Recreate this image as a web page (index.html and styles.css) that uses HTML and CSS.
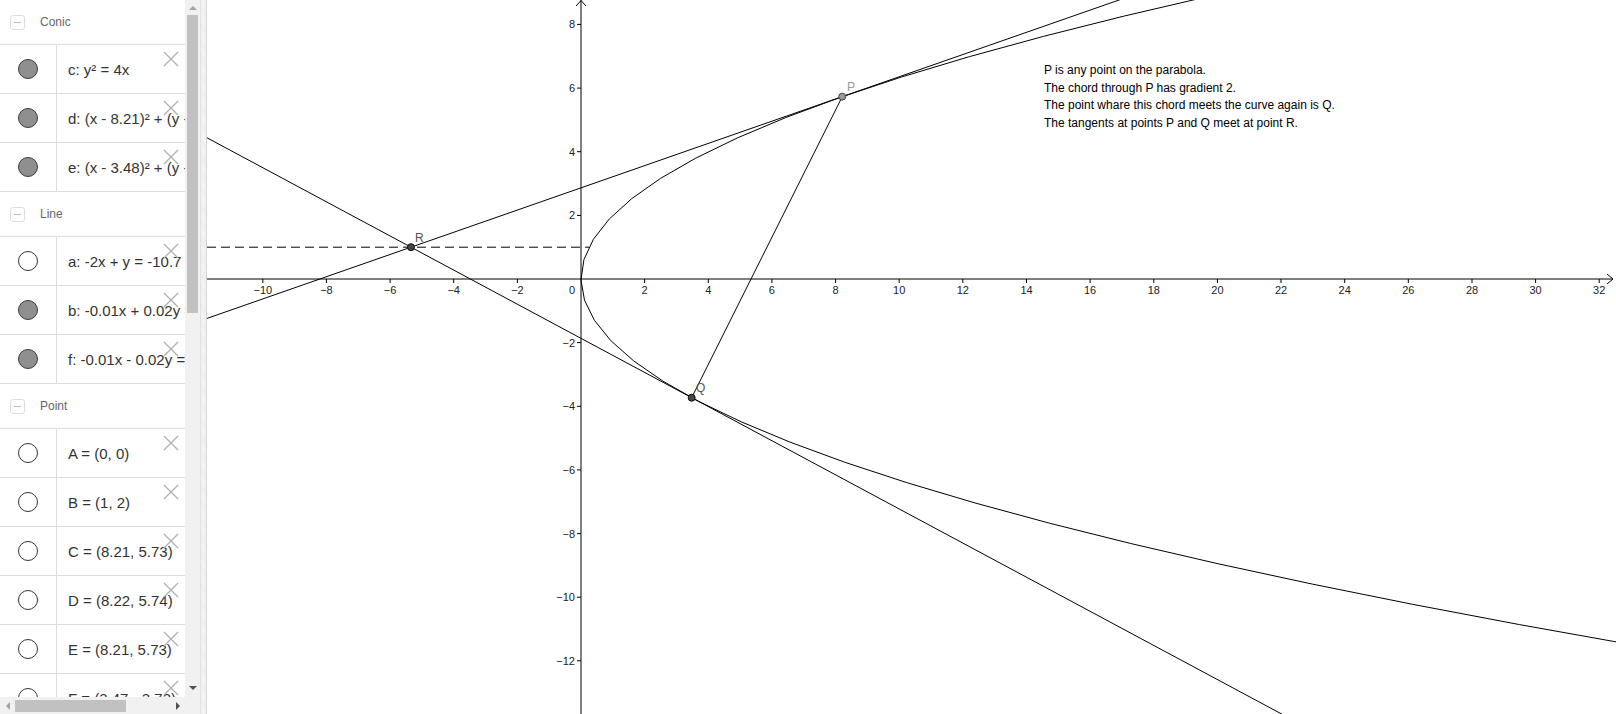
FILE: index.html
```html
<!DOCTYPE html>
<html>
<head>
<meta charset="utf-8">
<link rel="stylesheet" href="styles.css">
</head>
<body>
<div class="app">
  <aside class="algebra">
    <div class="list">
      <div class="group-head"><span class="toggle"></span><span class="gname">Conic</span></div>
      <div class="item"><div class="marble-cell"><span class="marble filled"></span></div><div class="expr">c: y² = 4x</div><svg class="del" viewBox="0 0 16 16"><path d="M1 1L15 15M15 1L1 15"/></svg></div>
      <div class="item"><div class="marble-cell"><span class="marble filled"></span></div><div class="expr">d: (x - 8.21)² + (y - 5.73)² = 0</div><svg class="del" viewBox="0 0 16 16"><path d="M1 1L15 15M15 1L1 15"/></svg></div>
      <div class="item"><div class="marble-cell"><span class="marble filled"></span></div><div class="expr">e: (x - 3.48)² + (y + 3.73)² = 0</div><svg class="del" viewBox="0 0 16 16"><path d="M1 1L15 15M15 1L1 15"/></svg></div>
      <div class="group-head"><span class="toggle"></span><span class="gname">Line</span></div>
      <div class="item"><div class="marble-cell"><span class="marble"></span></div><div class="expr">a: -2x + y = -10.7</div><svg class="del" viewBox="0 0 16 16"><path d="M1 1L15 15M15 1L1 15"/></svg></div>
      <div class="item"><div class="marble-cell"><span class="marble filled"></span></div><div class="expr">b: -0.01x + 0.02y = 0</div><svg class="del" viewBox="0 0 16 16"><path d="M1 1L15 15M15 1L1 15"/></svg></div>
      <div class="item"><div class="marble-cell"><span class="marble filled"></span></div><div class="expr">f: -0.01x - 0.02y = 0</div><svg class="del" viewBox="0 0 16 16"><path d="M1 1L15 15M15 1L1 15"/></svg></div>
      <div class="group-head"><span class="toggle"></span><span class="gname">Point</span></div>
      <div class="item"><div class="marble-cell"><span class="marble"></span></div><div class="expr">A = (0, 0)</div><svg class="del" viewBox="0 0 16 16"><path d="M1 1L15 15M15 1L1 15"/></svg></div>
      <div class="item"><div class="marble-cell"><span class="marble"></span></div><div class="expr">B = (1, 2)</div><svg class="del" viewBox="0 0 16 16"><path d="M1 1L15 15M15 1L1 15"/></svg></div>
      <div class="item"><div class="marble-cell"><span class="marble"></span></div><div class="expr">C = (8.21, 5.73)</div><svg class="del" viewBox="0 0 16 16"><path d="M1 1L15 15M15 1L1 15"/></svg></div>
      <div class="item"><div class="marble-cell"><span class="marble"></span></div><div class="expr">D = (8.22, 5.74)</div><svg class="del" viewBox="0 0 16 16"><path d="M1 1L15 15M15 1L1 15"/></svg></div>
      <div class="item"><div class="marble-cell"><span class="marble"></span></div><div class="expr">E = (8.21, 5.73)</div><svg class="del" viewBox="0 0 16 16"><path d="M1 1L15 15M15 1L1 15"/></svg></div>
      <div class="item"><div class="marble-cell"><span class="marble"></span></div><div class="expr">F = (3.47, -3.73)</div><svg class="del" viewBox="0 0 16 16"><path d="M1 1L15 15M15 1L1 15"/></svg></div>
    </div>
    <div class="vscroll">
      <div class="arrow-v"><span class="tri-up"></span></div>
      <div class="vthumb"></div>
      <div class="vspace"></div>
      <div class="arrow-v down"><span class="tri-down"></span></div>
    </div>
    <div class="hscroll">
      <div class="arrow-h"><span class="tri-left"></span></div>
      <div class="hthumb"></div>
      <div class="hspace"></div>
      <div class="arrow-h"><span class="tri-right"></span></div>
    </div>
    <div class="corner"></div>
  </aside>
  <div class="splitter"></div>
  <main class="graphics">
    <svg class="plot" width="1409" height="714" viewBox="207 0 1409 714">
      <g class="axes">
        <line x1="207" y1="279" x2="1613" y2="279"/>
        <path d="M1607 274L1613 279L1607 284"/>
        <line x1="581" y1="0" x2="581" y2="714"/>
        <path d="M576 6L581 0.5L586 6"/>
        <path d="M262.8 279v4M326.4 279v4M390.1 279v4M453.7 279v4M517.4 279v4M644.6 279v4M708.3 279v4M771.9 279v4M835.6 279v4M899.2 279v4M962.8 279v4M1026.5 279v4M1090.1 279v4M1153.8 279v4M1217.4 279v4M1281 279v4M1344.7 279v4M1408.3 279v4M1472 279v4M1535.6 279v4M1599.2 279v4"/>
        <path d="M581 24.4h-4M581 88.1h-4M581 151.7h-4M581 215.4h-4M581 342.6h-4M581 406.3h-4M581 469.9h-4M581 533.6h-4M581 597.2h-4M581 660.8h-4"/>
      </g>
      <g class="xlab">
        <text x="262.8" y="294">−10</text>
        <text x="326.4" y="294">−8</text>
        <text x="390.1" y="294">−6</text>
        <text x="453.7" y="294">−4</text>
        <text x="517.4" y="294">−2</text>
        <text x="644.6" y="294">2</text>
        <text x="708.3" y="294">4</text>
        <text x="771.9" y="294">6</text>
        <text x="835.6" y="294">8</text>
        <text x="899.2" y="294">10</text>
        <text x="962.8" y="294">12</text>
        <text x="1026.5" y="294">14</text>
        <text x="1090.1" y="294">16</text>
        <text x="1153.8" y="294">18</text>
        <text x="1217.4" y="294">20</text>
        <text x="1281" y="294">22</text>
        <text x="1344.7" y="294">24</text>
        <text x="1408.3" y="294">26</text>
        <text x="1472" y="294">28</text>
        <text x="1535.6" y="294">30</text>
        <text x="1599.2" y="294">32</text>
      </g>
      <g class="ylab">
        <text x="575" y="28.4">8</text>
        <text x="575" y="92.1">6</text>
        <text x="575" y="155.7">4</text>
        <text x="575" y="219.4">2</text>
        <text x="575" y="294">0</text>
        <text x="575" y="346.6">−2</text>
        <text x="575" y="410.3">−4</text>
        <text x="575" y="473.9">−6</text>
        <text x="575" y="537.6">−8</text>
        <text x="575" y="601.2">−10</text>
        <text x="575" y="664.8">−12</text>
      </g>
      <g class="curves">
        <path d="M1633 644.9Q-233.2 320.4 1211.1 -4.2"/>
        <line x1="207" y1="318.4" x2="1133.4" y2="-5"/>
        <line x1="207" y1="137.8" x2="1292.8" y2="720"/>
        <line x1="842.24" y1="96.67" x2="691.67" y2="397.69"/>
        <line class="dash" x1="207" y1="247.2" x2="589" y2="247.2"/>
      </g>
      <g class="pts">
        <circle class="pt-dark" cx="410.96" cy="247.17" r="3.5"/>
        <circle class="pt-dark" cx="691.67" cy="397.69" r="3.5"/>
        <circle class="pt-light" cx="842.24" cy="96.67" r="3.5"/>
        <text class="lab-dark" x="415" y="242">R</text>
        <text class="lab-dark" x="696" y="392">Q</text>
        <text class="lab-light" x="847" y="91">P</text>
      </g>
      <g class="note">
        <text x="1044" y="74">P is any point on the parabola.</text>
        <text x="1044" y="91.5">The chord through P has gradient 2.</text>
        <text x="1044" y="109">The point whare this chord meets the curve again is Q.</text>
        <text x="1044" y="126.5">The tangents at points P and Q meet at point R.</text>
      </g>
    </svg>
  </main>
</div>
</body>
</html>
```

FILE: styles.css
```css
html, body {
  margin: 0;
  padding: 0;
}
body {
  width: 1616px;
  height: 714px;
  overflow: hidden;
  background: #fff;
  font-family: "Liberation Sans", Arial, sans-serif;
}
.app {
  display: flex;
  height: 714px;
}
.algebra {
  width: 200px;
  flex: none;
  display: grid;
  grid-template-columns: 185px 15px;
  grid-template-rows: 697px 17px;
  background: #fff;
}
.list {
  overflow: hidden;
  position: relative;
}
.group-head {
  height: 44px;
  border-bottom: 1px solid #dcdcdc;
  display: flex;
  align-items: center;
}
.toggle {
  width: 13px;
  height: 13px;
  margin-left: 10px;
  border: 1px solid #dddddd;
  border-radius: 3px;
  position: relative;
  box-sizing: content-box;
}
.toggle::after {
  content: "";
  position: absolute;
  left: 3px;
  right: 3px;
  top: 6px;
  height: 1px;
  background: #bbbbbb;
}
.gname {
  margin-left: 15px;
  font-size: 12px;
  color: #666;
}
.item {
  height: 48px;
  border-bottom: 1px solid #dcdcdc;
  display: flex;
  align-items: center;
  position: relative;
}
.marble-cell {
  width: 56px;
  height: 100%;
  flex: none;
  border-right: 1px solid #dcdcdc;
  display: flex;
  align-items: center;
  justify-content: center;
}
.marble {
  width: 18px;
  height: 18px;
  border-radius: 50%;
  border: 1px solid #333;
  background: #fff;
}
.marble.filled {
  background: #8f8f8f;
  border-color: #3a3a3a;
}
.expr {
  padding-left: 11px;
  font-size: 15px;
  color: #333;
  white-space: nowrap;
}
.del {
  position: absolute;
  left: 163px;
  top: 6px;
  width: 16px;
  height: 16px;
  fill: none;
  stroke: #b0b0b0;
  stroke-width: 1.3;
}
.vscroll {
  background: #f1f1f1;
  display: flex;
  flex-direction: column;
}
.arrow-v {
  height: 15px;
  display: flex;
  align-items: center;
  justify-content: center;
}
.arrow-v.down {
  height: 18px;
}
.tri-up {
  width: 0;
  height: 0;
  border-left: 4px solid transparent;
  border-right: 4px solid transparent;
  border-bottom: 4px solid #a3a3a3;
}
.tri-down {
  width: 0;
  height: 0;
  border-left: 4px solid transparent;
  border-right: 4px solid transparent;
  border-top: 4px solid #505050;
}
.vthumb {
  height: 298px;
  margin: 0 2px;
  background: #c1c1c1;
}
.vspace {
  flex: 1;
}
.hscroll {
  background: #f1f1f1;
  display: flex;
  align-items: center;
}
.arrow-h {
  width: 15px;
  height: 17px;
  display: flex;
  align-items: center;
  justify-content: center;
}
.tri-left {
  width: 0;
  height: 0;
  border-top: 4px solid transparent;
  border-bottom: 4px solid transparent;
  border-right: 4px solid #a3a3a3;
}
.tri-right {
  width: 0;
  height: 0;
  border-top: 4px solid transparent;
  border-bottom: 4px solid transparent;
  border-left: 4px solid #505050;
}
.hthumb {
  width: 111px;
  height: 12px;
  background: #c1c1c1;
}
.hspace {
  flex: 1;
}
.corner {
  background: #f1f1f1;
}
.splitter {
  width: 5px;
  flex: none;
  border-left: 1px solid #e2e2e2;
  border-right: 1px solid #d6d6d6;
  background: repeating-linear-gradient(45deg, #f6f6f6 0, #f6f6f6 1px, #ececec 1px, #ececec 2px);
}
.graphics {
  flex: 1;
  position: relative;
  overflow: hidden;
  background: #fff;
}
.plot {
  display: block;
}
.axes line, .axes path {
  stroke: #000;
  stroke-width: 1;
  fill: none;
}
.xlab text, .ylab text {
  font-family: "Liberation Sans", Arial, sans-serif;
  font-size: 11px;
  fill: #222;
}
.xlab text {
  text-anchor: middle;
}
.ylab text {
  text-anchor: end;
}
.curves path, .curves line {
  stroke: #000;
  stroke-width: 1;
  fill: none;
}
.curves .dash {
  stroke-dasharray: 9 5;
}
.pt-dark {
  fill: #444;
  stroke: #111;
  stroke-width: 1;
}
.pt-light {
  fill: #9a9a9a;
  stroke: #444;
  stroke-width: 1;
}
.lab-dark, .lab-light {
  font-family: "Liberation Sans", Arial, sans-serif;
  font-size: 12px;
}
.lab-dark {
  fill: #555;
}
.lab-light {
  fill: #999;
}
.note text {
  font-family: "Liberation Sans", Arial, sans-serif;
  font-size: 12px;
  fill: #000;
}
```
